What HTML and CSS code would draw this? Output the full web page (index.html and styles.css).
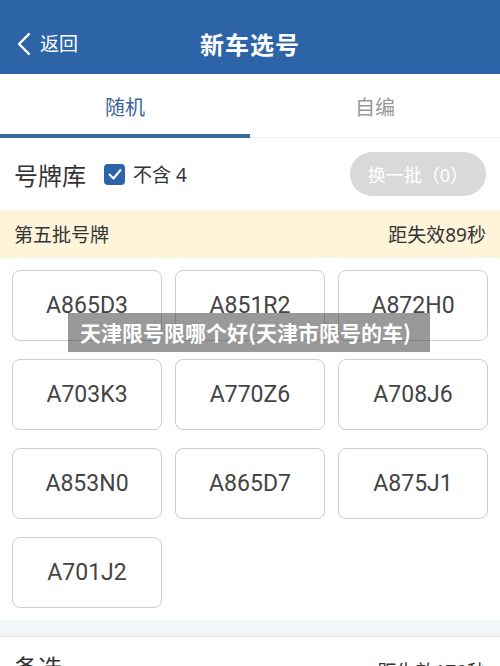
FILE: index.html
```html
<!DOCTYPE html>
<html lang="zh-CN">
<head>
<meta charset="utf-8">
<title>新车选号</title>
<link rel="stylesheet" href="styles.css">
</head>
<body>
<div class="page">
  <header class="topbar">
    <div class="back">
      <svg class="chev" viewBox="0 0 16 24" width="16" height="24"><path d="M13 2 L3 12 L13 22" fill="none" stroke="#fff" stroke-width="2.4" stroke-linecap="round" stroke-linejoin="round"/></svg>
      <span>返回</span>
    </div>
    <div class="title">新车选号</div>
  </header>
  <nav class="tabs">
    <div class="tab active">随机</div>
    <div class="tab">自编</div>
  </nav>
  <section class="lib">
    <div class="lib-left">
      <span class="lib-title">号牌库</span>
      <span class="check"><svg viewBox="0 0 20 20" width="20" height="20"><path d="M4.5 10.5 L8.5 14.5 L15.5 6" fill="none" stroke="#fff" stroke-width="2" stroke-linecap="round" stroke-linejoin="round"/></svg></span>
      <span class="check-label">不含 4</span>
    </div>
    <div class="btn">换一批（0）</div>
  </section>
  <div class="batch">
    <span>第五批号牌</span>
    <span>距失效89秒</span>
  </div>
  <div class="grid">
    <div class="plate">A865D3</div>
    <div class="plate">A851R2</div>
    <div class="plate">A872H0</div>
    <div class="plate">A703K3</div>
    <div class="plate">A770Z6</div>
    <div class="plate">A708J6</div>
    <div class="plate">A853N0</div>
    <div class="plate">A865D7</div>
    <div class="plate">A875J1</div>
    <div class="plate">A701J2</div>
  </div>
  <div class="band"></div>
  <section class="alt">
    <span class="alt-title">备选</span>
    <span class="alt-time">距失效170秒</span>
  </section>
  <div class="overlay">天津限号限哪个好(天津市限号的车)</div>
</div>
</body>
</html>
```
FILE: styles.css
```css
* { box-sizing: border-box; }
html, body { margin: 0; padding: 0; }
body {
  width: 500px;
  height: 666px;
  overflow: hidden;
  background: #fff;
  font-family: "Noto Sans", "Noto Sans CJK SC", sans-serif;
}
.page { position: relative; width: 500px; height: 666px; overflow: hidden; }
.topbar {
  position: relative;
  height: 74px;
  background: #2d64a8;
  display: flex;
  align-items: center;
  justify-content: center;
  padding-top: 14px;
}
.back {
  position: absolute;
  left: 16px;
  top: 32px;
  display: flex;
  align-items: center;
  gap: 8px;
  color: #fff;
  font-size: 19px;
  line-height: 24px;
}
.title {
  color: #fff;
  font-size: 24px;
  font-weight: 700;
  letter-spacing: 1px;
  font-family: "Noto Sans CJK SC", sans-serif;
  margin-top: -1px;
}
.tabs {
  display: flex;
  height: 64px;
  border-bottom: 1px solid #ececec;
}
.tab {
  flex: 1;
  display: flex;
  align-items: center;
  justify-content: center;
  font-size: 20px;
  color: #999;
  padding-top: 2px;
  font-family: "Noto Sans CJK SC", sans-serif;
}
.tab.active {
  color: #3a6598;
  border-bottom: 4px solid #396aa2;
  margin-bottom: -1px;
  padding-top: 5px;
}
.lib {
  display: flex;
  align-items: center;
  justify-content: space-between;
  height: 72px;
  padding: 0 14px;
}
.lib-left { display: flex; align-items: center; }
.lib-title {
  font-size: 24px;
  color: #333;
  font-family: "Noto Sans CJK SC", sans-serif;
  margin-right: 18px;
}
.check {
  width: 21px;
  height: 21px;
  background: #2d64a8;
  border-radius: 4px;
  display: flex;
  align-items: center;
  justify-content: center;
  margin-right: 8px;
}
.check-label { font-size: 19px; color: #333; }
.btn {
  width: 136px;
  height: 44px;
  border-radius: 22px;
  background: #d9d9d9;
  color: #fff;
  font-size: 18px;
  display: flex;
  align-items: center;
  justify-content: center;
}
.batch {
  display: flex;
  justify-content: space-between;
  align-items: center;
  height: 48px;
  padding: 0 14px;
  background: #fdf4da;
  font-size: 19px;
  color: #333;
}
.grid {
  display: grid;
  grid-template-columns: repeat(3, 150px);
  column-gap: 13px;
  row-gap: 18px;
  padding: 12px 12px 12px;
}
.plate {
  height: 71px;
  border: 1px solid #c9cdd4;
  border-radius: 8px;
  display: flex;
  align-items: center;
  justify-content: center;
  font-family: Roboto, "Noto Sans", sans-serif;
  font-size: 23px;
  color: #444;
}
.band {
  height: 17px;
  background: #f3f6f9;
  border-bottom: 1px solid #e3e7ec;
}
.alt {
  display: flex;
  justify-content: space-between;
  align-items: flex-start;
  padding: 12px 14px 0;
}
.alt-title { font-size: 24px; color: #333; font-family: "Noto Sans CJK SC", sans-serif; }
.alt-time { font-size: 19px; color: #333; padding-top: 8px; }
.overlay {
  position: absolute;
  left: 68px;
  top: 313px;
  width: 362px;
  height: 39px;
  background: rgba(60, 60, 60, 0.52);
  color: #fff;
  font-weight: 700;
  font-size: 21px;
  line-height: 39px;
  padding-left: 12px;
  font-family: "Noto Sans CJK SC", sans-serif;
  white-space: nowrap;
}
```
